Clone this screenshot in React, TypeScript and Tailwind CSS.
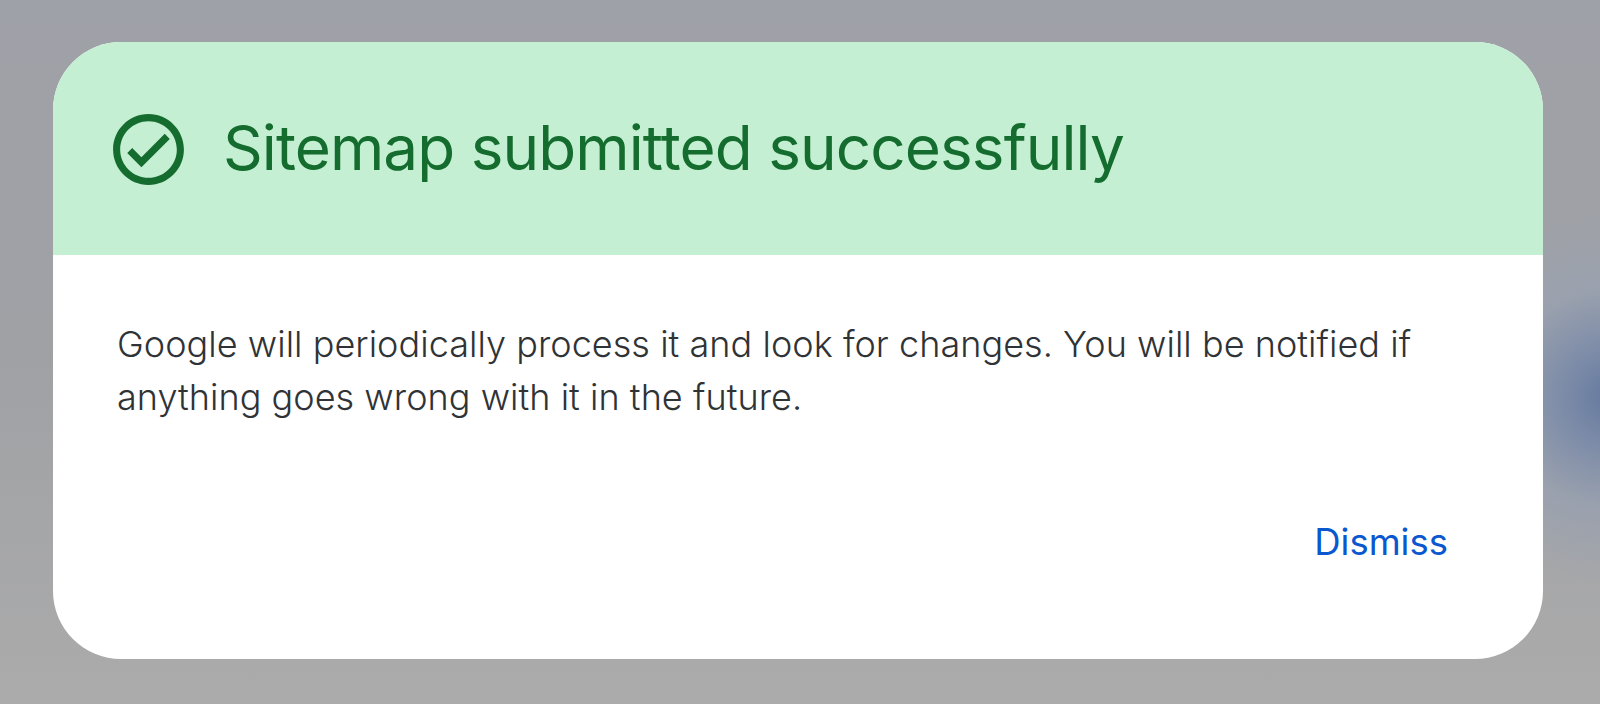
export default function App() {
  return (
    <div className="w-[1600px] h-[704px] overflow-hidden pl-[53px] pt-[42px] bg-[radial-gradient(circle_at_1612px_398px,#64799f_0px,#7d8ca8_50px,#9aa1ae_110px,rgba(169,169,169,0)_190px),linear-gradient(180deg,#9fa1a8_0%,#a0a1a5_50%,#ababab_100%)]">
      <div className="w-[1490px] h-[617px] rounded-[68px] overflow-hidden bg-white flex flex-col font-['Inter',sans-serif]">
        {/* Header */}
        <div className="h-[213px] bg-[#c4efd2] flex items-center pl-[60px] gap-[32px] pt-[2px]">
          <svg viewBox="0 0 24 24" className="w-[85px] h-[85px] shrink-0 -ml-[7px] fill-[#146c2e]">
            <path d="M12 2C6.48 2 2 6.48 2 12s4.48 10 10 10 10-4.48 10-10S17.52 2 12 2zm0 18c-4.41 0-8-3.59-8-8s3.59-8 8-8 8 3.59 8 8-3.59 8-8 8zm4.59-12.42L10 14.17l-2.59-2.58L6 13l4 4 8-8z" />
          </svg>
          <h1 className="text-[62px] leading-[72px] font-normal text-[#146c2e] tracking-[-0.92px] -mt-[4px]">Sitemap submitted successfully</h1>
        </div>

        {/* Body */}
        <div className="flex-1 flex flex-col pl-[64px] pr-[95px] pt-[63px]">
          <p className="text-[36px] leading-[53px] font-light text-[#303336] tracking-[0.04px] mr-[2px]">
            Google will periodically process it and look for changes. You will be notified if anything goes wrong with it in the future.
          </p>
          <div className="flex justify-end mt-[96px]">
            <button className="text-[36.5px] leading-[44px] font-normal text-[#0b57d0]">Dismiss</button>
          </div>
        </div>
      </div>
    </div>
  )
}
